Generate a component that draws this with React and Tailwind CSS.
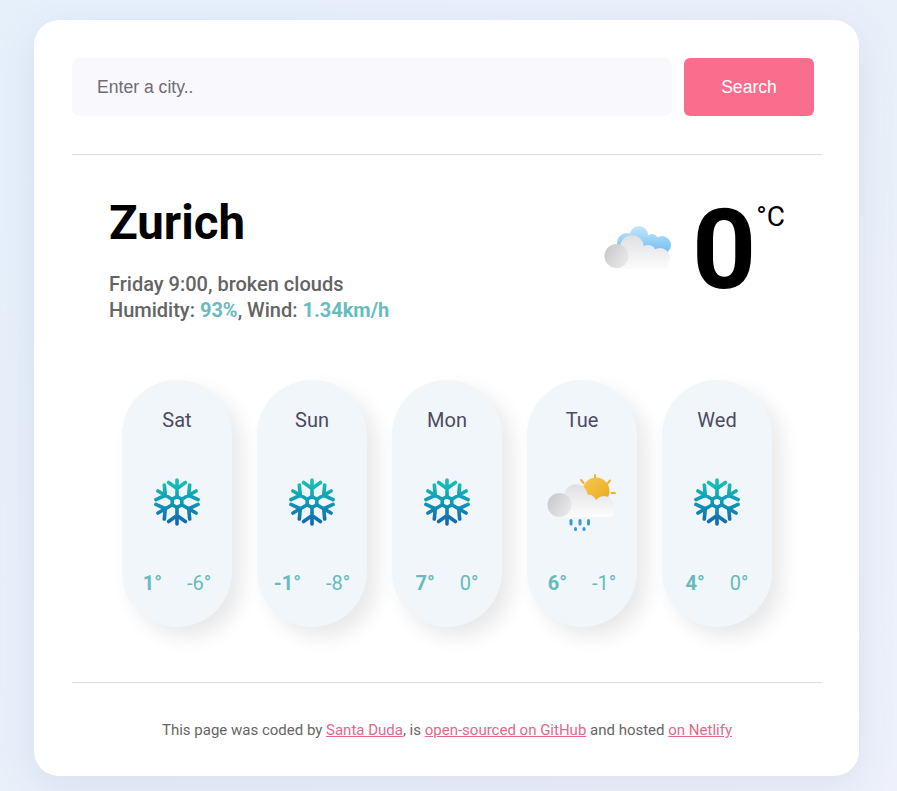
import React from "react";

const rot = (x, y, a) => {
  const r = (a * Math.PI) / 180;
  const dx = x - 24;
  const dy = y - 24;
  return `${(24 + dx * Math.cos(r) - dy * Math.sin(r)).toFixed(2)} ${(24 + dx * Math.sin(r) + dy * Math.cos(r)).toFixed(2)}`;
};
const snowPath = [0, 60, 120, 180, 240, 300]
  .map(
    (a) =>
      `M${rot(24, 18.5, a)} L${rot(24, 2, a)} M${rot(15.6, 4.5, a)} L${rot(24, 10.5, a)} L${rot(32.4, 4.5, a)}`
  )
  .join(" ");
const hexPath =
  "M" + [0, 60, 120, 180, 240, 300].map((a) => rot(24, 18.5, a)).join(" L") + " Z";

function Defs() {
  return (
    <svg width="0" height="0" className="absolute">
      <defs>
        <linearGradient id="snow" gradientUnits="userSpaceOnUse" x1="0" y1="0" x2="0" y2="48">
          <stop offset="0" stopColor="#18c6b6" />
          <stop offset="0.5" stopColor="#0e9ab6" />
          <stop offset="1" stopColor="#1560b2" />
        </linearGradient>
        <linearGradient id="cloudA" gradientUnits="userSpaceOnUse" x1="0" y1="20" x2="0" y2="58">
          <stop offset="0" stopColor="#dfdfe1" />
          <stop offset="0.55" stopColor="#f0f0f2" />
          <stop offset="1" stopColor="#ffffff" />
        </linearGradient>
        <linearGradient id="cloudB" gradientUnits="userSpaceOnUse" x1="0" y1="14" x2="0" y2="48">
          <stop offset="0" stopColor="#dfdfe1" />
          <stop offset="0.55" stopColor="#f0f0f2" />
          <stop offset="1" stopColor="#ffffff" />
        </linearGradient>
        <linearGradient id="puff" x1="0" y1="0.2" x2="1" y2="0.8">
          <stop offset="0" stopColor="#c8c8ca" />
          <stop offset="1" stopColor="#ebebed" />
        </linearGradient>
        <linearGradient id="blue" gradientUnits="userSpaceOnUse" x1="0" y1="12" x2="0" y2="40">
          <stop offset="0" stopColor="#c4e6fa" />
          <stop offset="1" stopColor="#6cbdf3" />
        </linearGradient>
        <linearGradient id="sun" x1="0" y1="0" x2="1" y2="1">
          <stop offset="0" stopColor="#f5c94e" />
          <stop offset="1" stopColor="#eba81f" />
        </linearGradient>
      </defs>
    </svg>
  );
}

function Snowflake() {
  return (
    <svg width="48" height="48" viewBox="0 0 48 48" fill="none">
      <g stroke="url(#snow)" strokeWidth="3.6" strokeLinecap="round" strokeLinejoin="round">
        <path d={snowPath} />
        <path d={hexPath} />
      </g>
    </svg>
  );
}

function BrokenClouds() {
  return (
    <svg width="70" height="70" viewBox="0 0 70 70">
      <g fill="url(#blue)">
        <circle cx="37" cy="21" r="9" />
        <circle cx="25" cy="29" r="10" />
        <circle cx="50" cy="26" r="6" />
        <circle cx="60" cy="31" r="9" />
        <rect x="22" y="26" width="40" height="14" />
      </g>
      <g fill="url(#cloudA)">
        <circle cx="30" cy="33" r="11.7" />
        <circle cx="46" cy="39" r="8" />
        <circle cx="58" cy="44" r="10" />
        <rect x="14" y="40" width="46" height="15" />
        <rect x="28" y="44" width="39" height="11" rx="5" />
      </g>
      <circle cx="14.5" cy="42" r="12" fill="url(#puff)" />
    </svg>
  );
}

function SunCloudRain() {
  return (
    <svg width="70" height="70" viewBox="0 0 70 70">
      <g transform="translate(0 3)">
        <g stroke="#f0b030" strokeWidth="2" strokeLinecap="round">
          <path d="M48 5 V8" />
          <path d="M34 10 L36.5 13" />
          <path d="M63 10.5 L60.5 13.5" />
          <path d="M64.5 23 H68" />
        </g>
        <circle cx="49" cy="21" r="13.5" fill="url(#sun)" />
        <g fill="url(#cloudB)">
          <circle cx="29" cy="26" r="11.7" />
          <circle cx="41" cy="33" r="8.5" />
          <circle cx="57" cy="36" r="10" />
          <rect x="14" y="34" width="44" height="13" />
          <rect x="30" y="36" width="37" height="11" rx="5" />
        </g>
        <circle cx="12.5" cy="35" r="12" fill="url(#puff)" />
        <g fill="#3f97d6">
          <rect x="22.5" y="49" width="3" height="6.5" rx="1.5" />
          <rect x="31.5" y="49" width="3" height="6.5" rx="1.5" />
          <rect x="40" y="49" width="3" height="6.5" rx="1.5" />
          <rect x="27" y="57" width="3" height="4" rx="1.5" />
          <rect x="35.5" y="57" width="3" height="4" rx="1.5" />
        </g>
      </g>
    </svg>
  );
}

const days = [
  { d: "Sat", hi: "1°", lo: "-6°", icon: "snow" },
  { d: "Sun", hi: "-1°", lo: "-8°", icon: "snow" },
  { d: "Mon", hi: "7°", lo: "0°", icon: "snow" },
  { d: "Tue", hi: "6°", lo: "-1°", icon: "rain" },
  { d: "Wed", hi: "4°", lo: "0°", icon: "snow" },
];

export default function App() {
  return (
    <div className="min-h-[791px] overflow-hidden pt-5 pl-[34px] font-['Roboto',sans-serif] bg-[linear-gradient(135deg,#e5f0fb_0%,#e9f0fa_55%,#eef1fb_100%)]">
      <Defs />
      <div className="w-[825px] h-[756px] bg-white rounded-[25px] pt-[38px] pl-[38px] pr-[37px] shadow-[0_10px_40px_rgba(65,76,150,0.1)]">
        <form className="flex gap-3 pr-2 font-['Liberation_Sans',sans-serif]">
          <input
            placeholder="Enter a city.."
            className="w-[600px] h-[58px] bg-[#f8f8fd] rounded-lg px-[25px] text-[17.6px] outline-none placeholder:text-[#6f6c76]"
          />
          <button type="button" className="w-[130px] h-[58px] bg-[#fb6d8c] rounded-md text-white text-[17.6px]">
            Search
          </button>
        </form>
        <hr className="mt-[38px] border-[#dedede]" />

        <div className="flex justify-between pl-[37px] pr-[37px] pt-[37px]">
          <div>
            <h1 className="mt-0.5 text-[47.4px] leading-[58px] font-bold text-black">Zurich</h1>
            <div className="mt-[19px] text-xl leading-[26px] font-medium text-[#646464]">
              <div>Friday 9:00, broken clouds</div>
              <div>
                Humidity: <span className="text-[#68bcbf] font-bold">93%</span>, Wind:{" "}
                <span className="text-[#68bcbf] font-bold">1.34km/h</span>
              </div>
            </div>
          </div>
          <div className="flex items-start">
            <div className="mt-[22px] mr-5">
              <BrokenClouds />
            </div>
            <div className="mt-0.5 text-[112px] leading-[112px] font-bold text-black">0</div>
            <div className="text-[28px] leading-8 text-black mt-[9px]">°C</div>
          </div>
        </div>

        <div className="flex justify-center gap-[25px] mt-[57px]">
          {days.map((x) => (
            <div
              key={x.d}
              className="w-[110px] h-[247px] rounded-[55px] bg-[#f0f6fa] flex flex-col items-center pt-[27px] shadow-[10px_10px_20px_rgba(0,0,0,0.09)]"
            >
              <div className="text-xl leading-[26px] text-[#4d4a63]">{x.d}</div>
              <div className="h-[70px] w-[70px] mt-[34px] flex items-center justify-center">
                {x.icon === "snow" ? <Snowflake /> : <SunCloudRain />}
              </div>
              <div className="flex justify-center gap-[25px] mt-[33px] text-xl leading-[26px] text-[#6ab9bd]">
                <span className="font-bold">{x.hi}</span>
                <span>{x.lo}</span>
              </div>
            </div>
          ))}
        </div>

        <hr className="mt-[55px] border-[#dedede]" />
        <p className="mt-[38px] text-center text-[15px] leading-[18px] text-[#666]">
          This page was coded by <a className="text-[#e5688a] underline">Santa Duda</a>, is{" "}
          <a className="text-[#e5688a] underline">open-sourced on GitHub</a> and hosted{" "}
          <a className="text-[#e5688a] underline">on Netlify</a>
        </p>
      </div>
    </div>
  );
}
